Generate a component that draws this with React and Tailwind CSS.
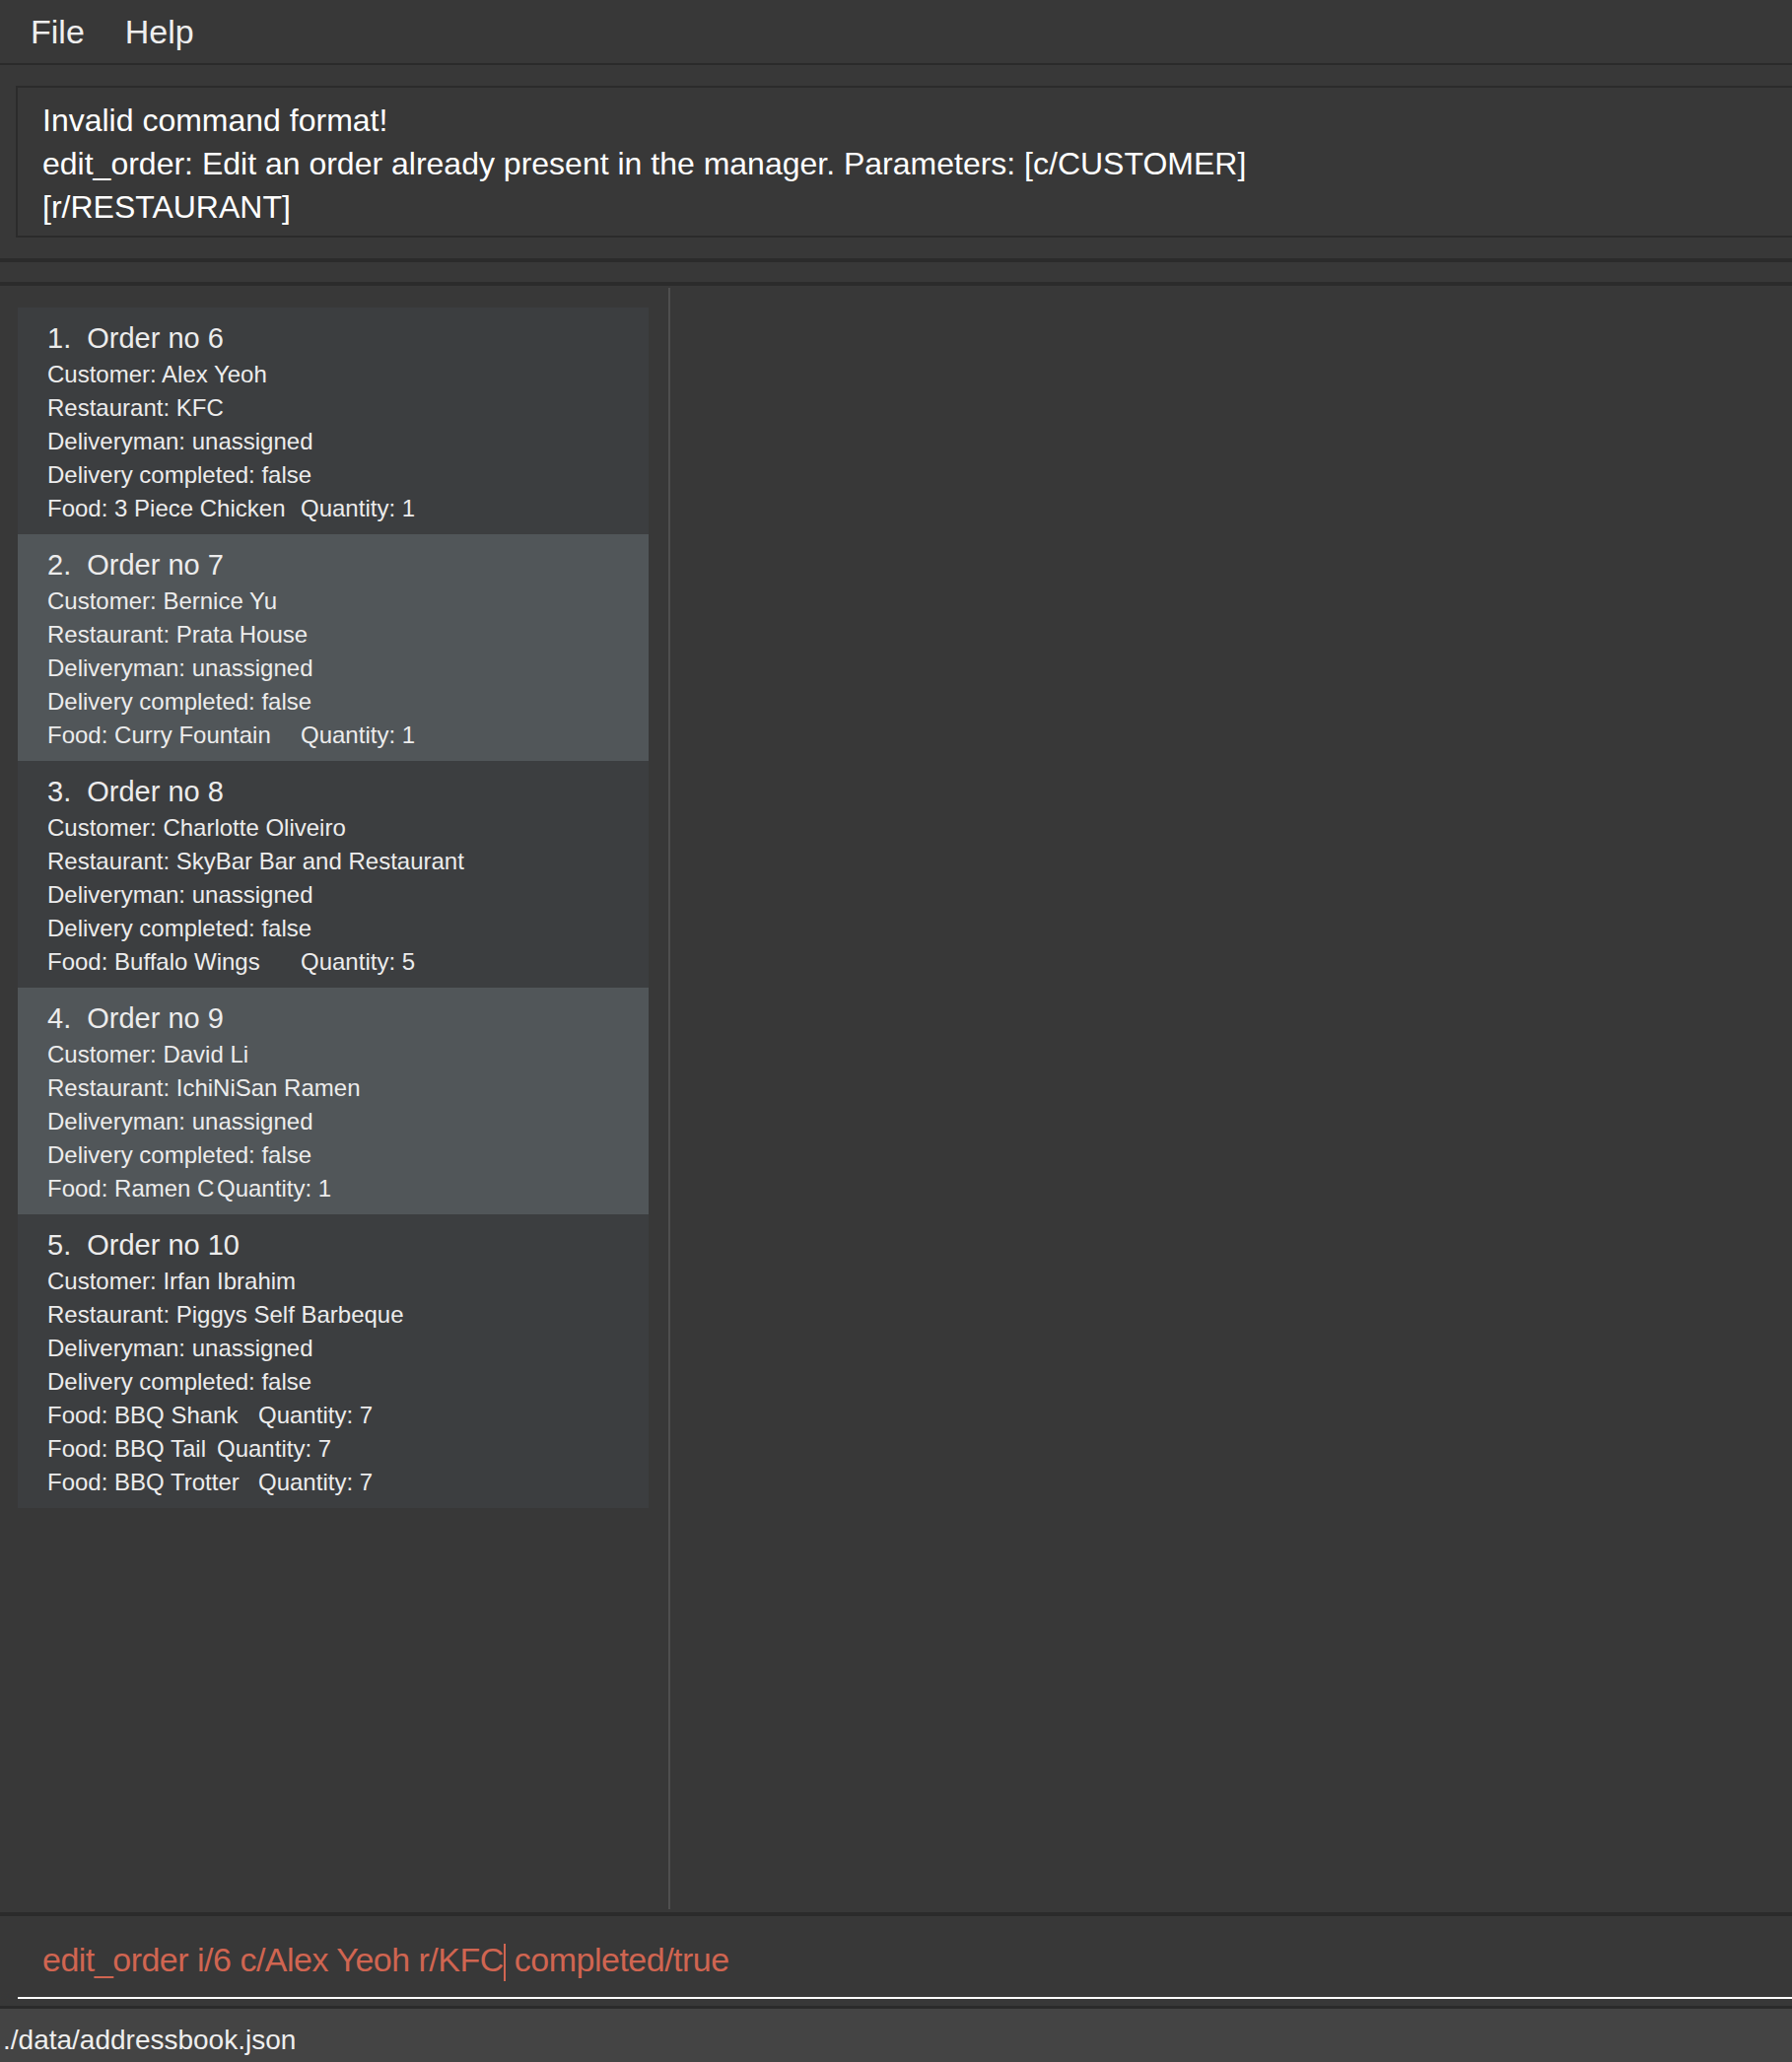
const orders = [
  {
    no: 6,
    customer: 'Alex Yeoh',
    restaurant: 'KFC',
    foods: [{ name: '3 Piece Chicken', qty: 1, tab: 'w-[257px]' }],
  },
  {
    no: 7,
    customer: 'Bernice Yu',
    restaurant: 'Prata House',
    foods: [{ name: 'Curry Fountain', qty: 1, tab: 'w-[257px]' }],
  },
  {
    no: 8,
    customer: 'Charlotte Oliveiro',
    restaurant: 'SkyBar Bar and Restaurant',
    foods: [{ name: 'Buffalo Wings', qty: 5, tab: 'w-[257px]' }],
  },
  {
    no: 9,
    customer: 'David Li',
    restaurant: 'IchiNiSan Ramen',
    foods: [{ name: 'Ramen C', qty: 1, tab: 'w-[172px]' }],
  },
  {
    no: 10,
    customer: 'Irfan Ibrahim',
    restaurant: 'Piggys Self Barbeque',
    foods: [
      { name: 'BBQ Shank', qty: 7, tab: 'w-[214px]' },
      { name: 'BBQ Tail', qty: 7, tab: 'w-[172px]' },
      { name: 'BBQ Trotter', qty: 7, tab: 'w-[214px]' },
    ],
  },
];

const font = { fontFamily: '"Liberation Sans", Arial, sans-serif' };

const OrderCard = ({ order, index }) => {
  const bg = index % 2 === 1 ? 'bg-[#515659]' : 'bg-[#3c3e40]';
  return (
    <div className={`${bg} pl-[30px] pt-[12px] pb-[9px] text-[#ececec]`}>
      <div className="flex text-[29px] leading-[39px] whitespace-nowrap">
        <span>{index + 1}.</span>
        <span className="ml-[16px]">Order no {order.no}</span>
      </div>
      <div className="text-[24px] leading-[34px] whitespace-nowrap">
        <div>Customer: {order.customer}</div>
        <div>Restaurant: {order.restaurant}</div>
        <div>Deliveryman: unassigned</div>
        <div>Delivery completed: false</div>
        {order.foods.map((f) => (
          <div key={f.name} className="flex">
            <span className={`${f.tab} shrink-0`}>Food: {f.name}</span>
            <span>Quantity: {f.qty}</span>
          </div>
        ))}
      </div>
    </div>
  );
};

export default function App() {
  return (
    <div className="flex h-[2092px] w-full flex-col overflow-hidden bg-[#383838]" style={font}>
      {/* menu bar */}
      <div className="flex h-[64px] shrink-0 items-center gap-[41px] pl-[31px] text-[34px] leading-[64px] text-[#eeeeee]">
        <span>File</span>
        <span>Help</span>
      </div>
      <div className="h-[2px] shrink-0 bg-[#2a2a2a]" />

      {/* result display */}
      <div className="h-[196px] shrink-0 pl-[16px] pt-[21px]">
        <div className="h-[154px] border-2 border-r-0 border-[#2b2b2b] pl-[25px] pt-[11px] text-[32px] leading-[44px] text-white">
          <div>Invalid command format!</div>
          <div>edit_order: Edit an order already present in the manager. Parameters: [c/CUSTOMER]</div>
          <div>[r/RESTAURANT]</div>
        </div>
      </div>
      <div className="h-[4px] shrink-0 bg-[#2b2b2b]" />
      <div className="h-[20px] shrink-0" />
      <div className="h-[4px] shrink-0 bg-[#2b2b2b]" />

      {/* list area */}
      <div className="flex min-h-0 flex-1">
        <div className="w-[678px] shrink-0 pl-[18px] pr-[20px] pt-[22px]">
          {orders.map((o, i) => (
            <OrderCard key={o.no} order={o} index={i} />
          ))}
        </div>
        <div className="mt-[2px] mb-[3px] w-[2px] shrink-0 bg-[#4f4f4f]" />
        <div className="flex-1" />
      </div>
      <div className="h-[4px] shrink-0 bg-[#2b2b2b]" />

      {/* command box */}
      <div className="h-[91px] shrink-0 pl-[18px] pt-[24px]">
        <div className="border-b-2 border-white pb-[16px] pl-[25px] text-[34px] leading-[40px] tracking-[-0.5px] text-[#d06551] whitespace-nowrap">
          <span>edit_order i/6 c/Alex Yeoh r/KFC</span>
          <span className="inline-block h-[38px] w-[2px] bg-[#d06551] align-middle" />
          <span> completed/true</span>
        </div>
      </div>
      <div className="h-[3px] shrink-0 bg-[#2b2b2b]" />

      {/* status bar */}
      <div className="h-[54px] shrink-0 bg-[#444444] pl-[3px] pt-[10px] text-[28px] leading-[44px] text-[#eeeeee]">
        ./data/addressbook.json
      </div>
    </div>
  );
}
